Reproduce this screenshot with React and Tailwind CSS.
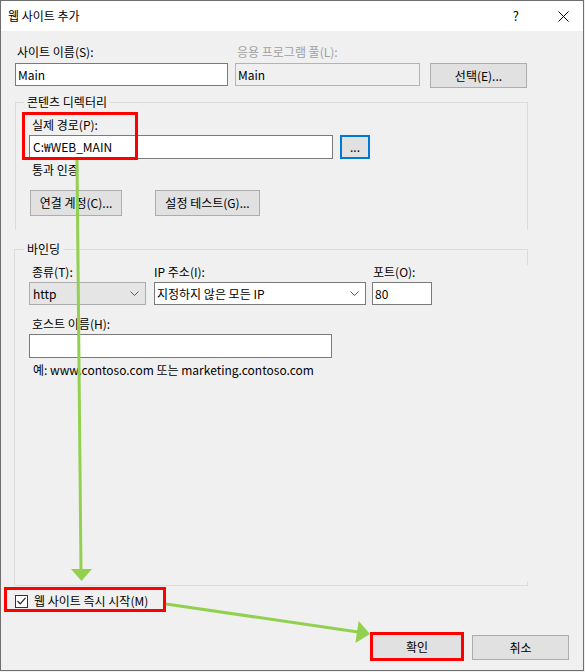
const Chevron = () => (
  <svg width="9" height="6" viewBox="0 0 9 6" className="mr-[6px]">
    <polyline points="0.5,0.5 4.5,4.5 8.5,0.5" fill="none" stroke="#5a5a5a" strokeWidth="1" />
  </svg>
)

const Btn = ({ className = '', children }) => (
  <div className={`flex items-center justify-center bg-[#e1e1e1] border border-[#adadad] ${className}`}>{children}</div>
)

export default function App() {
  return (
    <div className="relative w-[585px] h-[672px] bg-[#f0f0f0] font-['Noto_Sans_CJK_KR',sans-serif] text-[12px] leading-[18px] text-black">
      <div className="w-[584px] h-[671px] border border-[#6e6e6e] flex flex-col">
        {/* title bar */}
        <div className="h-[30px] bg-white flex items-center pl-[7px] shrink-0">
          <span className="flex-1">웹 사이트 추가</span>
          <span className="text-[13px] mr-[39px]">?</span>
          <svg width="11" height="11" viewBox="0 0 11 11" className="mr-[14px]">
            <path d="M0.5 0.5 L10.5 10.5 M10.5 0.5 L0.5 10.5" stroke="#000" strokeWidth="1" />
          </svg>
        </div>

        <div className="flex-1 bg-[#f0f0f0] pl-[14px] pt-[11px]">
          {/* site name / app pool */}
          <div className="flex items-start">
            <div className="w-[213px]">
              <div className="h-[20px] leading-[20px] pl-[2px]">사이트 이름(S):</div>
              <div className="mt-[1px] h-[23px] bg-white border border-[#7a7a7a] pl-[2px] leading-[21px]">Main</div>
            </div>
            <div className="w-[185px] ml-[7px]">
              <div className="h-[20px] leading-[20px] pl-[2px] text-[#a0a0a0]">응용 프로그램 풀(L):</div>
              <div className="mt-[1px] h-[23px] bg-[#f0f0f0] border border-[#b4b4b4] pl-[2px] leading-[21px]">Main</div>
            </div>
            <Btn className="ml-[10px] mt-[21px] w-[97px] h-[25px]">선택(E)...</Btn>
          </div>

          {/* content directory */}
          <div className="mt-[14px] w-[513px] h-[128px] border-t border-l border-r border-[#dcdcdc] pl-[13px]">
            <div className="-mt-[10px] -ml-[5px] w-fit px-[3px] bg-[#f0f0f0]">콘텐츠 디렉터리</div>
            <div className="mt-[5px] pl-[3px]">실제 경로(P):</div>
            <div className="mt-[1px] flex">
              <div className="w-[304px] h-[24px] bg-white border border-[#7a7a7a] pl-[3px] leading-[22px]">C:₩WEB_MAIN</div>
              <div className="ml-[7px] w-[30px] h-[24px] bg-[#e1e1e1] border-2 border-[#0078d7] flex items-center justify-center leading-[14px]">...</div>
            </div>
            <div className="mt-[2px] pl-[3px]">통과 인증</div>
            <div className="mt-[11px] flex">
              <Btn className="ml-[1px] w-[92px] h-[26px]">연결 계정(C)...</Btn>
              <Btn className="ml-[33px] w-[105px] h-[26px]">설정 테스트(G)...</Btn>
            </div>
          </div>

          {/* binding */}
          <div className="relative mt-[19px] -ml-[1px] w-[514px] h-[337px] border-t border-l border-b border-[#dcdcdc] pl-[14px]">
            <div className="absolute right-0 top-0 w-px h-[15px] bg-[#dcdcdc]" />
            <div className="absolute right-0 bottom-0 w-px h-[3px] bg-[#dcdcdc]" />
            <div className="-mt-[10px] -ml-[5px] w-fit px-[3px] bg-[#f0f0f0]">바인딩</div>
            <div className="mt-[5px] flex">
              <div className="w-[117px]">
                <div className="pl-[3px]">종류(T):</div>
                <div className="mt-[1px] h-[23px] bg-[#e5e5e5] border border-[#adadad] flex items-center justify-between pl-[3px]">
                  <span>http</span>
                  <Chevron />
                </div>
              </div>
              <div className="ml-[8px] w-[212px]">
                <div>IP 주소(I):</div>
                <div className="mt-[1px] h-[23px] bg-white border border-[#7a7a7a] flex items-center justify-between pl-[2px]">
                  <span>지정하지 않은 모든 IP</span>
                  <Chevron />
                </div>
              </div>
              <div className="ml-[6px] w-[60px]">
                <div className="pl-[1px]">포트(O):</div>
                <div className="mt-[1px] h-[23px] bg-white border border-[#7a7a7a] pl-[2px] leading-[21px]">80</div>
              </div>
            </div>
            <div className="mt-[10px] pl-[3px]">호스트 이름(H):</div>
            <div className="mt-[1px] w-[303px] h-[24px] bg-white border border-[#7a7a7a]" />
            <div className="mt-[3px] pl-[4px]">예: www.contoso.com 또는 marketing.contoso.com</div>
          </div>

          {/* start immediately */}
          <div className="mt-[6px] flex items-center h-[18px]">
            <div className="w-[13px] h-[13px] border border-[#333] bg-white flex items-center justify-center">
              <svg width="9" height="8" viewBox="0 0 9 8">
                <polyline points="0.5,4 3.2,6.8 8.5,0.8" fill="none" stroke="#222" strokeWidth="1.2" />
              </svg>
            </div>
            <span className="ml-[6px]">웹 사이트 즉시 시작(M)</span>
          </div>

          {/* OK / Cancel */}
          <div className="mt-[22px] flex justify-end items-start pr-[14px]">
            <div className="w-[94px] h-[29px] bg-[#e1e1e1] border-[3px] border-[#ff0000] flex items-center justify-center">확인</div>
            <Btn className="ml-[8px] mt-[3px] w-[97px] h-[25px]">취소</Btn>
          </div>
        </div>
      </div>

      {/* annotations */}
      <div className="absolute left-[22px] top-[112px] w-[116px] h-[48px] border-[3px] border-[#ff0000]" />
      <div className="absolute left-[4px] top-[587px] w-[162px] h-[25px] border-[3px] border-[#ff0000]" />
      <svg className="absolute left-0 top-0 pointer-events-none" width="585" height="672">
        <line x1="77" y1="160" x2="81" y2="570" stroke="#92d050" strokeWidth="3" />
        <polygon points="71,569 92,569 81.5,581" fill="#92d050" />
        <line x1="166" y1="604" x2="358" y2="632" stroke="#92d050" strokeWidth="3" />
        <polygon points="358.6,621 370,634 355.4,643" fill="#92d050" />
      </svg>
    </div>
  )
}
